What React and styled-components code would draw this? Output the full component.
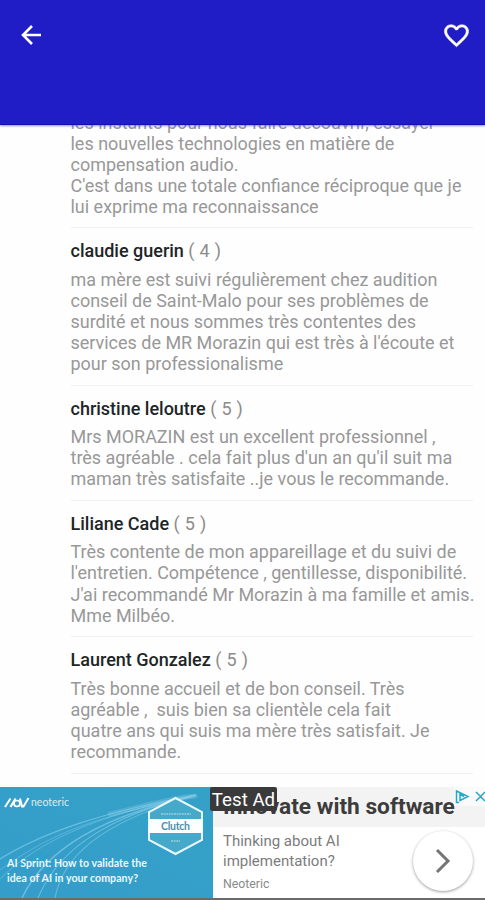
import React from "react";
import styled, { createGlobalStyle } from "styled-components";

const GlobalStyle = createGlobalStyle`
  body {
    margin: 0;
    background: #fefefe;
    font-family: Roboto, "Liberation Sans", sans-serif;
  }
`;

const Screen = styled.div`
  display: flex;
  flex-direction: column;
  width: 485px;
  height: 900px;
  overflow: hidden;
`;

const Header = styled.header`
  display: flex;
  flex: 0 0 125px;
  box-sizing: border-box;
  justify-content: space-between;
  align-items: flex-start;
  padding: 21px 14px 0 17px;
  background: #201dc6;
  border-bottom: 1px solid #120fb4;
  box-shadow: 0 1px 2px rgba(32, 29, 198, 0.5);
  z-index: 1;
`;

const IconButton = styled.button`
  display: flex;
  padding: 0;
  border: 0;
  background: none;
  color: #fff;
`;

const Reviews = styled.main`
  flex: 1;
  min-height: 0;
  overflow: hidden;
  padding: 0 12px 0 70.5px;
`;

const Review = styled.article`
  padding: 12px 0 10.9px;
  border-bottom: 1px solid #f1f1f1;

  &:first-child {
    margin-top: -25px;
    padding-bottom: 10.1px;
  }
`;

const Author = styled.h2`
  margin: 0 0 7.2px;
  font-size: 18px;
  line-height: 21.1px;
  font-weight: 500;
  color: #1d2527;

  & span {
    font-weight: 400;
    color: #8c8c8c;
    letter-spacing: 0.3px;
  }
`;

const Comment = styled.p`
  margin: 0 0 -0.2px;
  font-size: 17.98px;
  line-height: 21.1px;
  color: #989898;
  white-space: pre;
`;

const Banner = styled.aside`
  display: flex;
  flex: 0 0 113px;
  box-sizing: border-box;
  height: 113px;
  position: relative;
  background: #fff;
  border-bottom: 2px solid #6b6b6b;
`;

const Visual = styled.div`
  width: 213px;
  flex-shrink: 0;
  background: #36a0ca;

  & svg {
    display: block;
  }
`;

const Copy = styled.div`
  flex: 1;
  min-width: 0;
`;

const Headline = styled.h3`
  box-sizing: border-box;
  height: 40px;
  margin: 0;
  padding: 7px 0 0 10px;
  background: #f3f3f3;
  font-size: 22.7px;
  line-height: 26px;
  font-weight: 700;
  color: #3c3c3c;
  white-space: nowrap;
`;

const Details = styled.div`
  display: flex;
  justify-content: space-between;
  padding: 4px 12px 0 10px;
`;

const Pitch = styled.p`
  margin: 0;
  font-size: 15px;
  line-height: 20px;
  color: #7c7c7c;
  white-space: pre;

  & small {
    display: block;
    margin-top: 3px;
    font-size: 12.3px;
    color: #8a8a8a;
  }
`;

const Go = styled.button`
  display: flex;
  align-items: center;
  justify-content: center;
  width: 60px;
  height: 60px;
  padding: 0;
  border: 0;
  border-radius: 50%;
  background: #fff;
  color: #757575;
  box-shadow: 0 1px 3px rgba(0, 0, 0, 0.4);
`;

const TestBadge = styled.div`
  position: absolute;
  left: 210px;
  top: 0;
  box-sizing: border-box;
  width: 67px;
  height: 24px;
  border-radius: 2px;
  background: #3a3a3a;
  color: #fff;
  font-size: 18.7px;
  line-height: 26px;
  text-align: center;
  white-space: nowrap;
`;

const AdChoices = styled.div`
  position: absolute;
  right: 0;
  top: 0;
  width: 31px;
  height: 19px;
  background: #fafafa;
`;

const reviews = [
  {
    text: `les instants pour nous faire découvrir, essayer
les nouvelles technologies en matière de
compensation audio.
C'est dans une totale confiance réciproque que je
lui exprime ma reconnaissance`,
  },
  {
    author: "claudie guerin",
    rating: 4,
    text: `ma mère est suivi régulièrement chez audition
conseil de Saint-Malo pour ses problèmes de
surdité et nous sommes très contentes des
services de MR Morazin qui est très à l'écoute et
pour son professionalisme`,
  },
  {
    author: "christine leloutre",
    rating: 5,
    text: `Mrs MORAZIN est un excellent professionnel ,
très agréable . cela fait plus d'un an qu'il suit ma
maman très satisfaite ..je vous le recommande.`,
  },
  {
    author: "Liliane Cade",
    rating: 5,
    text: `Très contente de mon appareillage et du suivi de
l'entretien. Compétence , gentillesse, disponibilité.
J'ai recommandé Mr Morazin à ma famille et amis.
Mme Milbéo.`,
  },
  {
    author: "Laurent Gonzalez",
    rating: 5,
    text: `Très bonne accueil et de bon conseil. Très
agréable ,  suis bien sa clientèle cela fait
quatre ans qui suis ma mère très satisfait. Je
recommande.`,
  },
];

const Artwork = () => (
  <svg width="213" height="111" viewBox="0 0 213 111">
    <defs>
      <linearGradient id="sky" x1="0" y1="1" x2="1" y2="0">
        <stop offset="0" stopColor="#349dca" />
        <stop offset="1" stopColor="#35a1c7" />
      </linearGradient>
    </defs>
    <rect width="213" height="111" fill="url(#sky)" />
    <g fill="none" stroke="#8fd2ec" strokeLinecap="round">
      <path d="M0 72C45 44 105 25 195 8" strokeWidth="1.2" opacity=".6" />
      <path d="M0 92C40 52 100 28 195 8" strokeWidth="1" opacity=".45" />
      <path d="M22 111C45 62 105 28 195 9" strokeWidth="1.5" opacity=".6" />
      <path d="M38 111C56 68 98 32 190 10" strokeWidth="1" opacity=".7" />
      <path d="M55 111C62 72 98 38 178 14" strokeWidth="1.2" opacity=".5" />
      <path d="M0 83C55 43 100 30 180 12" strokeWidth="1" opacity=".4" />
      <path d="M110 27C140 20 165 12 195 9" strokeWidth="5" opacity=".3" />
    </g>
    <g fill="none" stroke="#fff" strokeWidth="2">
      <path d="M5 20L10.5 11.5M10.5 20L15.500 11.5" />
      <circle cx="17" cy="16.500" r="3" strokeWidth="1.7" />
      <path d="M20 11.500L22 19.500H23.500L28.500 11" />
    </g>
    <g fill="#fff" fontFamily="Lato, sans-serif">
      <text x="31" y="19" fontSize="10.5" textLength="38" opacity=".8">neoteric</text>
      <g fontSize="10.6" fontWeight="700" fill="#e9f8ff">
        <text x="7" y="80" textLength="140">AI Sprint: How to validate the</text>
        <text x="7" y="95" textLength="131">idea of AI in your company?</text>
      </g>
    </g>
    <path d="M175.5 11L202 25V53L175.5 67L149 53V25Z" fill="#46a9c9" stroke="#e9f8ff" strokeWidth="2" />
    <path d="M149 32H202V46H149Z" fill="#fff" />
    <g textAnchor="middle" fontFamily="Lato, sans-serif">
      <text x="175.5" y="43" fontSize="10.5" fontWeight="700" fill="#4a91a8" textLength="29">Clutch</text>
      <path d="M161 27H191M171 54H180" stroke="#c5e7f3" strokeWidth="1.5" strokeDasharray="2 .6" opacity=".6" />
    </g>
  </svg>
);

export default function App() {
  return (
    <>
      <GlobalStyle />
      <Screen>
        <Header>
          <IconButton aria-label="Retour">
            <svg width="28" height="28" viewBox="0 0 28 28" fill="none" stroke="currentColor" strokeWidth="2.6">
              <path d="M24 14H6M15 5L6 14L15 23" />
            </svg>
          </IconButton>
          <IconButton aria-label="Favori">
            <svg width="29" height="29" viewBox="0 0 24 24" fill="currentColor" stroke="currentColor" strokeWidth=".4">
              <path d="M16.5 3c-1.74 0-3.41.81-4.5 2.09C10.91 3.81 9.24 3 7.5 3 4.42 3 2 5.42 2 8.5c0 3.78 3.4 6.86 8.55 11.54L12 21.35l1.45-1.32C18.6 15.36 22 12.28 22 8.5 22 5.42 19.58 3 16.5 3zm-4.4 15.55l-.1.1-.1-.1C7.14 14.24 4 11.39 4 8.5 4 6.5 5.5 5 7.5 5c1.54 0 3.04.99 3.57 2.36h1.87C13.46 5.99 14.96 5 16.5 5c2 0 3.5 1.5 3.5 3.5 0 2.89-3.14 5.74-7.9 10.05z" />
            </svg>
          </IconButton>
        </Header>
        <Reviews>
          {reviews.map((review) => (
            <Review key={review.text}>
              {review.author ? (
                <Author>
                  {review.author} <span>( {review.rating} )</span>
                </Author>
              ) : null}
              <Comment>{review.text}</Comment>
            </Review>
          ))}
        </Reviews>
        <Banner>
          <Visual>
            <Artwork />
          </Visual>
          <Copy>
            <Headline>Innovate with software</Headline>
            <Details>
              <Pitch>
                {"Thinking about AI\nimplementation?"}
                <small>Neoteric</small>
              </Pitch>
              <Go aria-label="Ouvrir">
                <svg width="20" height="28" viewBox="0 0 20 28" fill="none" stroke="currentColor" strokeWidth="3">
                  <path d="M4 3L15 14L4 25" />
                </svg>
              </Go>
            </Details>
          </Copy>
          <TestBadge>Test Ad</TestBadge>
          <AdChoices>
            <svg width="31" height="19" viewBox="0 0 31 19" fill="none" stroke="#20a9c8" strokeWidth="1.5">
              <path d="M5 15.5H2.500V4L14 9.500L6 13.500V7.500L10 9.500M22 5L31 14M31 5L22 14" />
            </svg>
          </AdChoices>
        </Banner>
      </Screen>
    </>
  );
}
